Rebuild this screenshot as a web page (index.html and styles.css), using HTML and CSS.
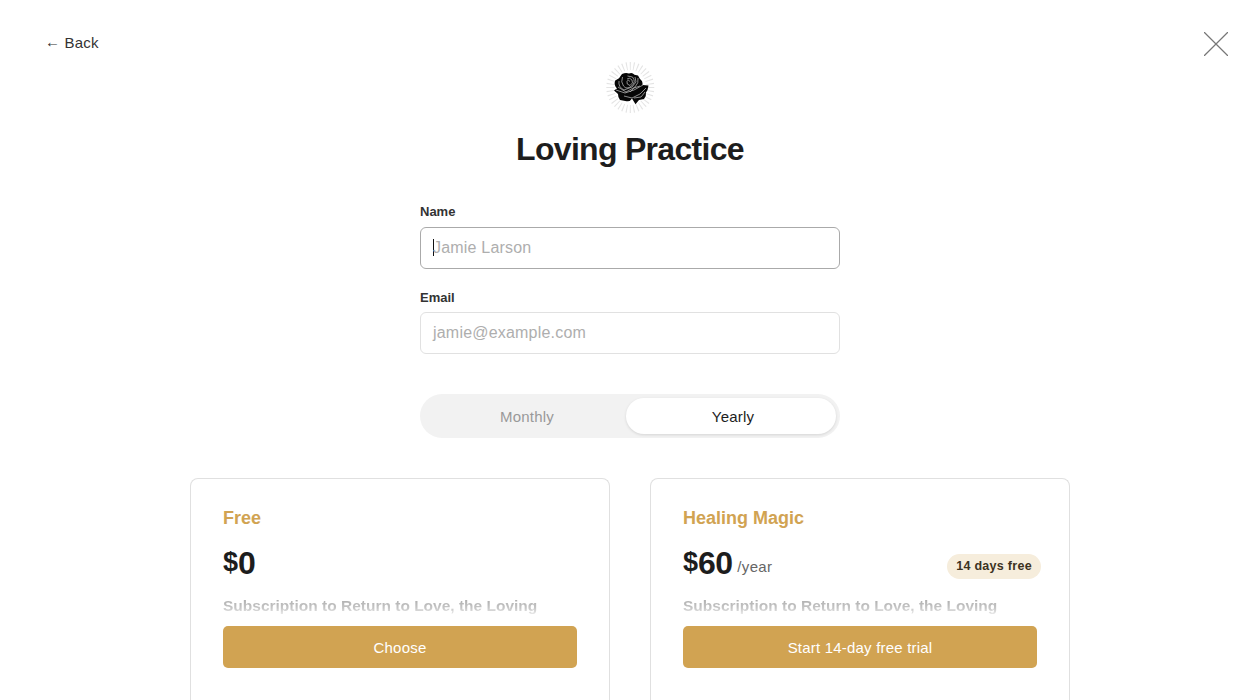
FILE: index.html
```html
<!DOCTYPE html>
<html lang="en">
<head>
<meta charset="utf-8">
<title>Loving Practice</title>
<link rel="stylesheet" href="styles.css">
</head>
<body>
<a class="back"><span class="arrow">←</span> Back</a>
<svg class="close" viewBox="0 0 24 24"><path d="M.4.4l23.2 23.2M23.6.4L.4 23.6"/></svg>
<main>
  <svg class="logo" viewBox="0 0 60 60">
    <ellipse class="rays" cx="30.3" cy="31.5" rx="20" ry="21.5" pathLength="360"/>
    <path class="rose" d="M22 18Q26 16 29 17.600Q32 16 34.500 18.700L38 19.500L40 23Q43 25 42.500 29L48.500 29.500Q48 34 46 36.500Q46.500 40 44 43L39 44L35.500 48.300L32 42.500Q30 46 26.500 45.200L20 44Q17.800 41 18 38L14 34.500L17 32.500Q13.500 29 15.200 24.500L19 22.200Z"/>
    <path class="petals" d="M27 23q3-2 5 1t-2 5.500q-4-1-3-4t3 0M22.500 21q-2 5 1 9t8 0 1-9l-5-1M19 25q-1 6 5 9l8-3 4-5-1-5M38 22q1 5-3 9l-9 5-8-5M16 34l9 3 9-3 9-5M24 40l8 2 8-4 6-6M34 42l7-1 4-5M30 36l4-4 6-2"/>
  </svg>
  <h1>Loving Practice</h1>
  <form>
    <label class="field"><span>Name</span><span class="input focused"><i class="caret"></i>Jamie Larson</span></label>
    <label class="field email"><span>Email</span><span class="input">jamie@example.com</span></label>
    <div class="switch"><span>Monthly</span><span class="active">Yearly</span></div>
  </form>
  <div class="plans">
    <section class="plan">
      <h2>Free</h2>
      <div class="price-row"><div class="price"><span class="currency">$</span><span class="amount">0</span></div></div>
      <p class="description">Subscription to Return to Love, the Loving</p>
      <button>Choose</button>
    </section>
    <section class="plan">
      <h2>Healing Magic</h2>
      <div class="price-row"><div class="price"><span class="currency">$</span><span class="amount">60</span><span class="period">/year</span></div><span class="badge">14 days free</span></div>
      <p class="description">Subscription to Return to Love, the Loving</p>
      <button>Start 14-day free trial</button>
    </section>
  </div>
</main>
</body>
</html>
```
FILE: styles.css
```css
* { box-sizing: border-box; }
body {
  margin: 0;
  height: 700px;
  overflow: hidden;
  background: #fff;
  color: #1d1d1d;
  font: 15px/20px "Liberation Sans", Arial, sans-serif;
  letter-spacing: 0.2px;
}
.back { position: absolute; left: 45px; top: 33px; color: #333; }
.arrow { position: relative; top: -1px; }
.close { position: absolute; left: 1204px; top: 32px; width: 24px; height: 24px; }
.close path { fill: none; stroke: #777; stroke-width: 1.25; stroke-linecap: round; }
main { display: flex; flex-direction: column; align-items: center; height: 700px; overflow: hidden; padding-top: 56px; }
main > * { flex-shrink: 0; }
.logo { width: 60px; height: 60px; }
.rays { fill: none; stroke: #e4e4e4; stroke-width: 8; stroke-dasharray: 2.8 7.2; stroke-dashoffset: 1.4; }
.rose { fill: #060606; }
.petals { fill: none; stroke: #c4c4c4; stroke-width: 0.7; }
h1 { margin: 13px 0 0; font-size: 32px; line-height: 40px; letter-spacing: -0.7px; }
form { width: 420px; margin-top: 33px; }
.field { display: block; margin-bottom: 18px; color: #333; font-size: 13px; font-weight: 700; letter-spacing: 0; }
.field > span { display: block; }
.field .input {
  display: flex;
  align-items: center;
  height: 42px;
  margin-top: 5px;
  padding: 0 12px;
  border: 1px solid #e1e1e1;
  border-radius: 6px;
  color: #aeaeae;
  font-size: 16px;
  font-weight: 400;
  letter-spacing: 0.2px;
}
.email { margin-top: 19px; }
.email .input { margin-top: 4px; }
.field .focused { border-color: #aaa; }
.caret { width: 1px; height: 17px; margin: 0 -1px 2px 0; background: #111; }
.switch { display: flex; height: 44px; margin-top: 40px; padding: 4px; border-radius: 22px; background: #f2f2f2; line-height: 37px; text-align: center; color: #999; }
.switch span { flex: 1; padding-left: 4px; }
.switch .active { flex: 0 0 210px; border-radius: 18px; background: #fff; color: #1d1d1d; box-shadow: 0 1px 3px rgba(0, 0, 0, 0.12); }
.plans { display: flex; gap: 40px; margin-top: 40px; }
.plan { width: 420px; height: 224px; padding: 28px 32px 0; border: 1px solid #e0e0e0; border-bottom: 0; border-radius: 8px 8px 0 0; }
h2 { margin: 0; color: #d1a352; font-size: 18px; line-height: 22px; letter-spacing: 0; }
.price-row { display: flex; align-items: center; justify-content: space-between; height: 40px; margin: 14px -4px 0 0; }
.price { display: flex; align-items: baseline; font-weight: 700; }
.currency { position: relative; top: -3px; font-size: 27px; letter-spacing: 0; }
.amount { font-size: 32px; line-height: 40px; letter-spacing: -0.02em; }
.period { position: relative; top: -2px; margin-left: 5px; color: #666; font-weight: 400; letter-spacing: 0.3px; }
.badge { height: 25px; margin-top: 7px; padding: 0 9px; border-radius: 13px; background: #f6eddc; color: #3c321f; font-size: 12.5px; font-weight: 700; line-height: 24px; letter-spacing: 0.3px; }
.description { height: 20px; margin: 13px 0 10px; font-weight: 700; font-size: 15.5px; letter-spacing: 0; white-space: nowrap; color: transparent; background: linear-gradient(#b0b0b0 20%, #c6c6c6 60%, #eee 95%); -webkit-background-clip: text; background-clip: text; }
button { display: block; width: 354px; height: 42px; padding: 2px 0 0; border: 0; border-radius: 5px; background: #d1a352; color: #fff; font: inherit; letter-spacing: 0.2px; }
```
